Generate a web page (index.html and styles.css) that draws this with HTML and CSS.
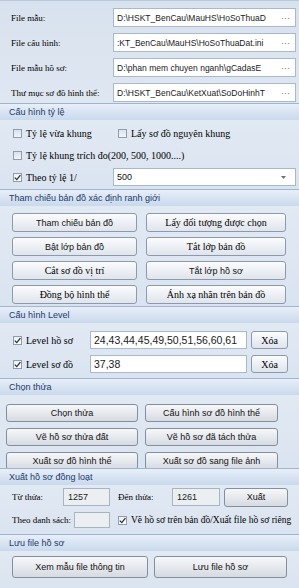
FILE: index.html
```html
<!DOCTYPE html>
<html lang="vi">
<head>
<meta charset="utf-8">
<title>Cấu hình hồ sơ</title>
<link rel="stylesheet" href="styles.css">
</head>
<body>
<div class="app">
  <div class="paths">
    <div class="prow"><span class="plabel">File mẫu:</span><div class="pbox"><span class="ptext">D:\HSKT_BenCau\MauHS\HoSoThuaD</span><span class="dots">···</span></div></div>
    <div class="prow"><span class="plabel">File cấu hình:</span><div class="pbox"><span class="ptext">:KT_BenCau\MauHS\HoSoThuaDat.ini</span><span class="dots">···</span></div></div>
    <div class="prow"><span class="plabel">File mẫu hồ sơ:</span><div class="pbox"><span class="ptext">D:\phan mem chuyen nganh\gCadasE</span><span class="dots">···</span></div></div>
    <div class="prow"><span class="plabel">Thư mục sơ đồ hình thể:</span><div class="pbox"><span class="ptext">D:\HSKT_BenCau\KetXuat\SoDoHinhT</span><span class="dots">···</span></div></div>
  </div>

  <div class="hdr">Cấu hình tỷ lệ</div>
  <div class="body scale">
    <div class="srow">
      <label class="chk c1"><span class="cb"></span>Tỷ lệ vừa khung</label>
      <label class="chk"><span class="cb"></span>Lấy sơ đồ nguyên khung</label>
    </div>
    <div class="srow">
      <label class="chk"><span class="cb"></span>Tỷ lệ khung trích đo(200, 500, 1000....)</label>
    </div>
    <div class="srow">
      <label class="chk c0"><span class="cb on"><svg viewBox="0 0 9 9" width="9" height="9"><polyline points="1.8,4.6 3.8,6.6 7.4,2.2" fill="none" stroke="#2b2f36" stroke-width="1.3"/></svg></span>Theo tỷ lệ 1/</label>
      <div class="combo"><span>500</span><svg class="arr" viewBox="0 0 5 3" width="5" height="3"><polygon points="0,0 5,0 2.5,3" fill="#6b7280"/></svg></div>
    </div>
  </div>

  <div class="hdr">Tham chiếu bản đồ xác định ranh giới</div>
  <div class="body refs">
    <div class="btn">Tham chiếu bản đồ</div>
    <div class="btn serif">Lấy đối tượng được chọn</div>
    <div class="btn">Bật lớp bản đồ</div>
    <div class="btn serif">Tắt lớp bản đồ</div>
    <div class="btn serif">Cắt sơ đồ vị trí</div>
    <div class="btn">Tắt lớp hồ sơ</div>
    <div class="btn serif">Đồng bộ hình thể</div>
    <div class="btn serif">Ánh xạ nhãn trên bản đồ</div>
  </div>

  <div class="hdr">Cấu hình Level</div>
  <div class="body levels">
    <div class="lrow">
      <label class="chk lc"><span class="cb on"><svg viewBox="0 0 9 9" width="9" height="9"><polyline points="1.8,4.6 3.8,6.6 7.4,2.2" fill="none" stroke="#2b2f36" stroke-width="1.3"/></svg></span>Level hồ sơ</label>
      <div class="linput">24,43,44,45,49,50,51,56,60,61</div>
      <div class="btn serif xoa">Xóa</div>
    </div>
    <div class="lrow">
      <label class="chk lc"><span class="cb on"><svg viewBox="0 0 9 9" width="9" height="9"><polyline points="1.8,4.6 3.8,6.6 7.4,2.2" fill="none" stroke="#2b2f36" stroke-width="1.3"/></svg></span>Level sơ đồ</label>
      <div class="linput">37,38</div>
      <div class="btn serif xoa">Xóa</div>
    </div>
  </div>

  <div class="hdr">Chọn thửa</div>
  <div class="body parcels">
    <div class="btn gray">Chọn thửa</div>
    <div class="btn gray">Cấu hình sơ đồ hình thể</div>
    <div class="btn gray">Vẽ hồ sơ thửa đất</div>
    <div class="btn gray">Vẽ hồ sơ đã tách thửa</div>
    <div class="btn gray">Xuất sơ đồ hình thể</div>
    <div class="btn gray">Xuất sơ đồ sang file ảnh</div>
  </div>

  <div class="hdr">Xuất hồ sơ đồng loạt</div>
  <div class="body batch">
    <div class="brow">
      <span class="blabel w1">Từ thửa:</span>
      <div class="binput i1">1257</div>
      <span class="blabel w2">Đến thửa:</span>
      <div class="binput i2">1261</div>
      <div class="btn gray export">Xuất</div>
    </div>
    <div class="brow">
      <span class="blabel w3">Theo danh sách:</span>
      <div class="binput i3"></div>
      <label class="chk small"><span class="cb on"><svg viewBox="0 0 9 9" width="9" height="9"><polyline points="1.8,4.6 3.8,6.6 7.4,2.2" fill="none" stroke="#2b2f36" stroke-width="1.3"/></svg></span>Vẽ hồ sơ trên bản đồ/Xuất file hồ sơ riêng</label>
    </div>
  </div>

  <div class="hdr">Lưu file hồ sơ</div>
  <div class="body save">
    <div class="btn gray s1">Xem mẫu file thông tin</div>
    <div class="btn gray s2">Lưu file hồ sơ</div>
  </div>
</div>
</body>
</html>
```

FILE: styles.css
```css
* { box-sizing: border-box; }
html, body { margin: 0; padding: 0; }
body {
  width: 299px;
  height: 588px;
  overflow: hidden;
  background: #dce5f0;
  font-family: "Liberation Sans", Arial, sans-serif;
  color: #111;
}
.app { display: flex; flex-direction: column; height: 588px; }

/* top path rows */
.paths {
  height: 103px;
  flex: none;
  border-top: 1px solid #b8c9de;
  padding: 7px 3px 0 0;
  display: flex;
  flex-direction: column;
  gap: 6px;
  background: linear-gradient(#d8e2ee, #dfe7f1);
}
.prow {
  display: grid;
  grid-template-columns: 113px 183px;
  height: 19px;
  align-items: center;
}
.plabel {
  padding-left: 11px;
  font: 9px "Liberation Serif", "Times New Roman", serif;
  white-space: nowrap;
  color: #000;
}
.pbox {
  height: 19px;
  background: #fff;
  border: 1px solid #a9b9cc;
  display: flex;
  align-items: center;
  padding: 0 2px 0 3px;
  overflow: hidden;
}
.ptext {
  flex: 1;
  min-width: 0;
  overflow: hidden;
  white-space: nowrap;
  font-size: 8.5px;
  color: #1a1a1a;
}
.dots {
  flex: none;
  width: 15px;
  margin-left: 3px;
  text-align: center;
  font-size: 9px;
  color: #6a6f76;
}

/* section header */
.hdr {
  height: 17px;
  flex: none;
  border-top: 1px solid #9fb5d3;
  background: linear-gradient(#e8eff8, #c9d9ed);
  color: #1b3a6b;
  font-size: 9px;
  padding-left: 9px;
  display: flex;
  align-items: center;
  white-space: nowrap;
}
.body { flex: none; background: linear-gradient(#e1e9f3, #dae4f0); }

/* checkbox */
.chk {
  display: flex;
  align-items: center;
  gap: 4px;
  font: 10px "Liberation Serif", "Times New Roman", serif;
  color: #000;
  white-space: nowrap;
}
.cb {
  flex: none;
  width: 9px;
  height: 9px;
  border: 1px solid #8e9db2;
  background: linear-gradient(#dde2e8, #f3f5f7);
  display: flex;
  align-items: center;
  justify-content: center;
  overflow: hidden;
}
.cb.on { background: linear-gradient(#eef1f4, #ffffff); }
.cb svg { flex: none; }

/* scale section */
.scale {
  height: 69px;
  padding: 4px 3px 3px 13px;
  display: flex;
  flex-direction: column;
  gap: 4px;
}
.srow { height: 18px; display: flex; align-items: center; }
.c1 { width: 105px; }
.c0 { width: 100px; }
.combo {
  width: 183px;
  height: 18px;
  background: #fff;
  border: 1px solid #a9b9cc;
  display: flex;
  align-items: center;
  justify-content: space-between;
  padding: 0 9px 0 3px;
  font-size: 9px;
}

/* buttons */
.btn {
  border: 1px solid #8e9aab;
  border-radius: 3px;
  background: linear-gradient(#fbfcfd, #eef1f5 45%, #dfe5ec);
  display: flex;
  align-items: center;
  justify-content: center;
  font-size: 9px;
  color: #111;
  white-space: nowrap;
}
.btn.serif { font: 10px "Liberation Serif", "Times New Roman", serif; color: #000; }
.btn.gray {
  border-color: #848f9e;
  background: linear-gradient(#f6f7f9, #e6e9ed 50%, #d6dbe2);
}

.refs {
  height: 100px;
  padding: 7px 0 2px 12px;
  display: grid;
  grid-template-columns: 125px 140px;
  grid-auto-rows: 19px;
  column-gap: 9px;
  row-gap: 5px;
}

/* levels */
.levels {
  height: 55px;
  padding: 8px 0 5px 13px;
  display: flex;
  flex-direction: column;
  gap: 6px;
}
.lrow { height: 18px; display: flex; align-items: center; }
.lc { width: 77px; }
.linput {
  width: 157px;
  height: 18px;
  background: #fff;
  border: 1px solid #a9b9cc;
  padding-left: 3px;
  display: flex;
  align-items: center;
  font-size: 10.5px;
  color: #1a1a1a;
}
.xoa { width: 37px; height: 18px; margin-left: 4px; font-size: 9px; }

/* choose parcel */
.parcels {
  height: 73px;
  overflow: hidden;
  padding: 9px 0 0 6px;
  display: grid;
  grid-template-columns: 132px 133px;
  grid-auto-rows: 18px;
  column-gap: 7px;
  row-gap: 6px;
}

/* batch export */
.batch {
  height: 49px;
  padding: 3px 0 0 12px;
  display: flex;
  flex-direction: column;
  gap: 5px;
}
.brow { height: 18px; display: flex; align-items: center; }
.blabel {
  flex: none;
  font: 9px "Liberation Serif", "Times New Roman", serif;
  color: #000;
  white-space: nowrap;
}
.w1 { width: 51px; }
.w2 { width: 54px; margin-left: 8px; }
.w3 { width: 62px; }
.binput {
  flex: none;
  height: 18px;
  background: #eceff2;
  border: 1px solid #a9b4c3;
  padding-left: 4px;
  display: flex;
  align-items: center;
  font-size: 9px;
  color: #222;
}
.i1 { width: 47px; }
.i2 { width: 48px; }
.i3 { width: 36px; height: 16px; }
.export { width: 64px; height: 19px; margin-left: 4px; }
.chk.small { margin-left: 8px; font-size: 9.5px; }

/* save */
.save {
  flex: 1;
  padding: 5px 0 0 12px;
  display: flex;
  align-items: flex-start;
  gap: 6px;
}
.s1 { width: 136px; height: 22px; }
.s2 { width: 133px; height: 22px; }
```
